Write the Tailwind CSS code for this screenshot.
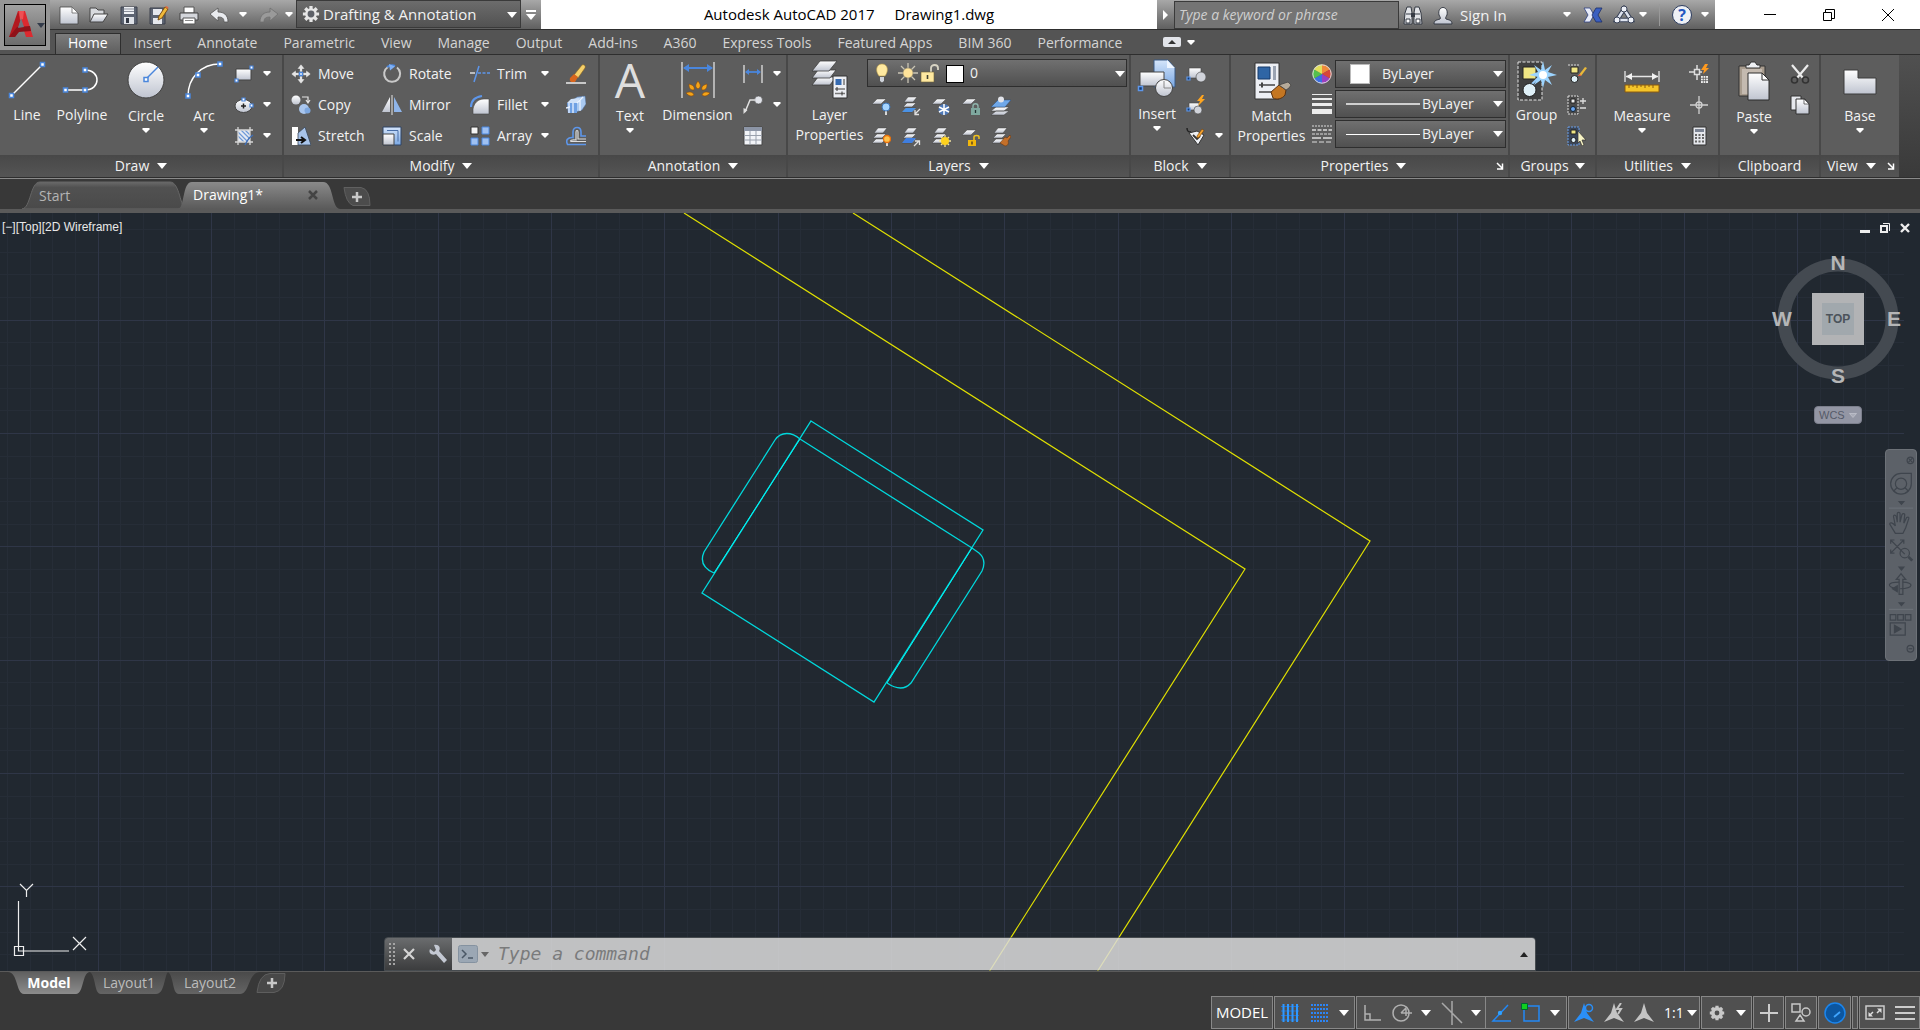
<!DOCTYPE html>
<html lang="en">
<head>
  <meta charset="UTF-8" />
  <title>Autodesk AutoCAD 2017 - Drawing1.dwg</title>
  <meta name="viewport" content="width=device-width, initial-scale=1" />
  <script src="https://cdn.jsdelivr.net/npm/@tailwindcss/browser@4"></script>
  <style>
    body { font-family: "Open Sans", "Noto Sans", sans-serif; }
  </style>
</head>
<body class="min-h-screen flex flex-col bg-[#383838] text-sm text-[#f2f2f2] overflow-hidden">

  <!-- ICON SPRITE -->
  <svg class="absolute w-0 h-0" aria-hidden="true">
    <defs>
      <linearGradient id="silver" x1="0" y1="0" x2="0" y2="1"><stop offset="0" stop-color="#fff"/><stop offset="1" stop-color="#bfc4d0"/></linearGradient>
      <linearGradient id="blue" x1="0" y1="0" x2="0" y2="1"><stop offset="0" stop-color="#d5e5fa"/><stop offset="1" stop-color="#7aa8e4"/></linearGradient>
      <linearGradient id="tabOn" x1="0" y1="0" x2="0" y2="1"><stop offset="0" stop-color="#8a8a8a"/><stop offset="1" stop-color="#5a5a5a"/></linearGradient>
      <linearGradient id="tabOff" x1="0" y1="0" x2="0" y2="1"><stop offset="0" stop-color="#6a6a6a"/><stop offset="0.2" stop-color="#515151"/><stop offset="1" stop-color="#4a4a4a"/></linearGradient>
      <linearGradient id="sheetOn" x1="0" y1="0" x2="0" y2="1"><stop offset="0" stop-color="#606060"/><stop offset="1" stop-color="#8c8c8c"/></linearGradient>
      <linearGradient id="sheetOff" x1="0" y1="0" x2="0" y2="1"><stop offset="0" stop-color="#4a4a4a"/><stop offset="1" stop-color="#646464"/></linearGradient>
    </defs>

    <symbol id="arrow" viewBox="0 0 8 5"><path d="M0.500 0h7v1.500L4 5 0.500 1.500z" fill="#fff"/></symbol>
    <symbol id="arrowBig" viewBox="0 0 10 6"><path d="M0 0h10L5 6z" fill="#fff"/></symbol>
    <symbol id="launcher" viewBox="0 0 8 8"><path d="M1 1l5 5M6.500 1.500v5.500H1" fill="none" stroke="#fff" stroke-width="1.500"/></symbol>

    <!-- quick access -->
    <symbol id="new" viewBox="0 0 20 20"><path d="M1 2h12l6 6v11H1z" fill="url(#silver)" stroke="#444" stroke-width="0.800"/><path d="M13 2v6h6z" fill="#fff" stroke="#666" stroke-width="0.800"/></symbol>
    <symbol id="open" viewBox="0 0 20 20"><path d="M1 17V3h6l2 2h6v4" fill="#d8dade" stroke="#444"/><path d="M1 17L5 9h14l-5 8z" fill="url(#silver)" stroke="#444"/></symbol>
    <symbol id="save" viewBox="0 0 20 20"><path d="M2 2h16v17H2z" fill="#5d6472" stroke="#3c414c"/><path d="M5 2h10v7H5z" fill="#eef0f4"/><path d="M5 4h10M5 6.500h10" stroke="#8b909c"/><path d="M5 12h10v7H5z" fill="#dfe2e8"/><path d="M7 13h3v5H7z" fill="#333945"/></symbol>
    <symbol id="saveas" viewBox="0 0 20 20"><path d="M1 3h15v16H1z" fill="#5d6472" stroke="#3c414c"/><path d="M4 4h9v6H4zM4 13h9v6H4z" fill="#e6e8ed"/><path d="M9 15l1-4 6-9 3 2-6 9z" fill="#f0b93a" stroke="#7a4e16"/><path d="M16 2l3 2 0.500-1.500-2-1.500z" fill="#e26a3f"/></symbol>
    <symbol id="print" viewBox="0 0 20 20"><path d="M5 2h10v6H5z" fill="#fff" stroke="#555"/><path d="M1 8h18v7H1z" fill="#d4d6db" stroke="#444"/><path d="M4 13h12v6H4z" fill="#fff" stroke="#555"/><path d="M6 15.500h8" stroke="#888"/></symbol>
    <symbol id="undo" viewBox="0 0 20 20"><path d="M1 9l8-6v4c6 0 10 3 10 10h-4c0-4-2-5-6-5v4z" fill="#e9ebef" stroke="#555" stroke-width="0.800"/></symbol>
    <symbol id="redo" viewBox="0 0 20 20"><path d="M19 9l-8-6v4C5 7 1 10 1 17h4c0-4 2-5 6-5v4z" fill="#9a9a9a" stroke="#707070" stroke-width="0.800"/></symbol>
    <symbol id="gear" viewBox="0 0 20 20"><g stroke="#e6e6e6" stroke-width="3.600"><path d="M10 1v18M1 10h18M3.600 3.600l12.800 12.800M16.400 3.600L3.600 16.400"/></g><circle cx="10" cy="10" r="6.500" fill="#e6e6e6"/><circle cx="10" cy="10" r="3.800" fill="#5e6168"/></symbol>
    <symbol id="binoculars" viewBox="0 0 20 20"><path d="M1 19l1-11 2-6h4l1 6v11zM11 19V8l1-6h4l2 6 1 11z" fill="#e2e4e8" stroke="#353a44"/><path d="M8 8h4v4H8z" fill="#353a44"/><path d="M3 14h4v4H3zM13 14h4v4h-4zM3 9h5M12 9h5" stroke="#353a44" fill="#fff"/></symbol>
    <symbol id="person" viewBox="0 0 20 20"><path d="M1 19c0-4 3-4 6-5 1-1 0-2-1-4-2-10 10-10 8 0-1 2-2 3-1 4 3 1 6 1 6 5z" fill="url(#silver)" stroke="#353a44"/></symbol>
    <symbol id="exchange" viewBox="0 0 20 18"><path d="M1 2h6l4 7-4 7H1l4-7z" fill="#e8ecf8" stroke="#2d4080" stroke-width="0.800"/><path d="M19 2h-6L9 9l4 7h6l-4-7z" fill="#3a5fc0" stroke="#1d2e68" stroke-width="0.800"/></symbol>
    <symbol id="a360" viewBox="0 0 22 20"><path d="M11 4L4 15h14z" fill="none" stroke="#3a4358" stroke-width="4.500"/><path d="M11 4L4 15h14z" fill="none" stroke="#dfe4f0" stroke-width="2.500"/><g fill="#eef1f8" stroke="#3a4358"><circle cx="11" cy="4" r="3"/><circle cx="4" cy="15" r="3"/><circle cx="18" cy="15" r="3"/></g></symbol>

    <!-- draw -->
    <symbol id="line" viewBox="0 0 40 40"><path d="M5 35L35 5" stroke="#fff" stroke-width="1.500"/><g fill="#fff" stroke="#4a86dc" stroke-width="1.500"><path d="M2.500 33.500h4v4h-4zM33.500 2.500h4v4h-4z"/></g></symbol>
    <symbol id="polyline" viewBox="0 0 40 40"><path d="M3 30h20c16 0 16-20 0-20" fill="none" stroke="#fff" stroke-width="1.500"/><g fill="#fff" stroke="#4a86dc" stroke-width="1.500"><path d="M1.500 28h4v4h-4zM21 28h4v4h-4zM21 8h4v4h-4z"/></g></symbol>
    <symbol id="circle" viewBox="0 0 40 40"><circle cx="20" cy="20" r="18" fill="url(#silver)" stroke="#3f3f3f"/><path d="M20 19L32 7" stroke="#4a86dc" stroke-width="1.500"/><path d="M18 17.500h4v4h-4z" fill="#fff" stroke="#4a86dc" stroke-width="1.500"/></symbol>
    <symbol id="arc" viewBox="0 0 40 40"><path d="M4 36C4 18 17 4 36 4" fill="none" stroke="#fff" stroke-width="1.500"/><g fill="#fff" stroke="#4a86dc" stroke-width="1.500"><path d="M2 34h4v4H2zM12 13h4v4h-4zM34 2h4v4h-4z"/></g></symbol>
    <symbol id="rect" viewBox="0 0 20 20"><path d="M2 5h15v11H2z" fill="url(#silver)" stroke="#444"/><path d="M16 2h3v3h-3zM1 15h3v3H1z" fill="#fff" stroke="#4a86dc" stroke-width="1.200"/></symbol>
    <symbol id="ellipse" viewBox="0 0 20 20"><ellipse cx="9.500" cy="11" rx="8.500" ry="6.500" fill="url(#silver)" stroke="#444"/><path d="M8 3h3v3H8zM16 9h3v3h-3z" fill="#fff" stroke="#4a86dc" stroke-width="1.200"/><path d="M7 11h5M9.500 8.500v5" stroke="#222" stroke-width="1.500"/></symbol>
    <symbol id="hatch" viewBox="0 0 20 20"><path d="M4 4h12v12H4z" fill="#e6eaf2"/><path d="M4 6l10 10M7 4l9 9M4 10l6 6M11 4l5 5" stroke="#6f9ad8" stroke-width="1.200"/><path d="M1 4h18M1 16h18M4 1v18M16 1v18" stroke="#d5d5d5" stroke-width="1.300"/><path d="M11 19c3-6 4-7 8-10" stroke="#3f6fb8" stroke-width="1.500" fill="none"/></symbol>

    <!-- modify -->
    <symbol id="move" viewBox="0 0 20 20"><path d="M10 0l4 5h-2.500v3h-3V5H6zM10 20l4-5h-2.500v-3h-3v3H6zM0 10l5-4v2.500h3v3H5V14zM20 10l-5-4v2.500h-3v3h3V14z" fill="#e4e4e4" stroke="#444" stroke-width="0.500"/><path d="M8.500 8.500h3v3h-3z" fill="#fff" stroke="#4a86dc" stroke-width="1.300"/></symbol>
    <symbol id="copy" viewBox="0 0 20 20"><circle cx="5" cy="5" r="4.500" fill="url(#silver)"/><circle cx="13" cy="14" r="5" fill="#a9c6ee"/><circle cx="16.500" cy="15.500" r="3" fill="#7ea8e0"/><path d="M11 2h6v5m-2-2l2 3 2-3" fill="none" stroke="#e4e4e4" stroke-width="1.200"/></symbol>
    <symbol id="stretch" viewBox="0 0 20 20"><path d="M1 1h6v18H1z" fill="#fff"/><path d="M7 19V7l7-6 6 18z" fill="#a8c4ea" stroke="#39475c" stroke-width="0.800"/><path d="M5 14h8m-3-3l4 3-4 3" fill="none" stroke="#111" stroke-width="2"/></symbol>
    <symbol id="rotate" viewBox="0 0 20 20"><path d="M6 3a8 8 0 1 0 9 0.500" fill="none" stroke="#c9c9c9" stroke-width="2"/><path d="M5 3c3-2 6-2 8-1" stroke="#4a86dc" stroke-width="2" fill="none"/><path d="M7 0l6 2.500-5 4z" fill="#7fb0f5"/></symbol>
    <symbol id="mirror" viewBox="0 0 20 20"><path d="M8 2v15H0z" fill="url(#silver)"/><path d="M12 2v15h8z" fill="#8fb5ea"/><path d="M10 0v20" stroke="#e8e8e8"/></symbol>
    <symbol id="scale" viewBox="0 0 20 20"><path d="M1 1h18v18H1z" fill="url(#blue)" stroke="#2e4466"/><path d="M1 8h11v11H1z" fill="url(#silver)" stroke="#444"/><path d="M5 4.500h11v11" fill="none" stroke="#486ea8"/></symbol>
    <symbol id="trim" viewBox="0 0 20 20"><path d="M0 9h5" stroke="#ddd" stroke-width="1.500"/><path d="M4 18L9 2" stroke="#5d96ea" stroke-width="1.500"/><path d="M8 9h12" stroke="#5d96ea" stroke-width="1.500" stroke-dasharray="3 1.500"/></symbol>
    <symbol id="fillet" viewBox="0 0 20 20"><path d="M3 19v-5C4 8 8 4 14 4h5v15z" fill="url(#silver)" stroke="#444" stroke-width="0.600"/><path d="M1 12C1 6 5 2 12 1" fill="none" stroke="#5d96ea" stroke-width="2"/></symbol>
    <symbol id="array" viewBox="0 0 20 20"><path d="M1 1h7v7H1z" fill="#f4f4f4" stroke="#333"/><g fill="#9ec0f2" stroke="#4a86dc"><path d="M12 1h7v7h-7zM1 12h7v7H1zM12 12h7v7h-7z"/></g></symbol>
    <symbol id="erase" viewBox="0 0 20 20"><path d="M8 11l8-10c2-1 4 1 3 3l-7 10z" fill="#f5d06a" stroke="#8a6420" stroke-width="0.600"/><path d="M4 14l4-4 4 3-3 5c-3 1-6 0-5-4z" fill="#d9661c"/><path d="M0 19h20" stroke="#ececec" stroke-width="1.500"/></symbol>
    <symbol id="explode" viewBox="0 0 20 20"><path d="M7 5l4-3 8-1 1 8-4 6-6 2z" fill="#a9c9f0" stroke="#4d6f9e" stroke-width="0.500"/><path d="M1 8h10v10H2z" fill="#6fa1e4"/><path d="M1 8l4-4 9-1-3 5z" fill="#cfe1f8"/><path d="M11 8l6-6M3 8v10M7 8v10M14 5v11M0 13l4-1" stroke="#e9f2ff" stroke-width="1.300"/></symbol>
    <symbol id="offset" viewBox="0 0 20 20"><path d="M20 18.500H1.500c-2-4 0-7.500 5.500-7V6c0-6 8-6 8 0v4h5" fill="none" stroke="#5d96ea" stroke-width="1.600"/><path d="M20 15.500H5c-1-1 0-2 5-1.500V6c0-2 2-2 2 0v7h8" fill="none" stroke="#ddd" stroke-width="1.200"/></symbol>

    <!-- annotation -->
    <symbol id="dimension" viewBox="0 0 40 40"><path d="M4 2v36M36 2v36" stroke="#e0e0e0" stroke-width="1.300"/><path d="M6 8h28" stroke="#4a86dc" stroke-width="2"/><path d="M5 8l6-4v8zM35 8l-6-4v8z" fill="#4a86dc"/><g fill="#f5a418" stroke="#8c4a08" stroke-width="0.600"><path d="M20 21c3 4 3 6 0 8-3-2-3-4 0-8zM11 24c4 1 6 3 5 6-4 0-5-2-5-6zM29 24c-4 1-6 3-5 6 4 0 5-2 5-6zM8 33c4-2 7-1 8 2-3 2-5 1-8-2zM32 33c-4-2-7-1-8 2 3 2 5 1 8-2z"/></g></symbol>
    <symbol id="linear" viewBox="0 0 20 20"><path d="M1 1v18M19 1v18" stroke="#e0e0e0" stroke-width="1.300"/><path d="M3 8h14" stroke="#4a86dc" stroke-width="1.800"/><path d="M2 8l4-3v6zM18 8l-4-3v6z" fill="#4a86dc"/></symbol>
    <symbol id="leader" viewBox="0 0 20 20"><circle cx="15.500" cy="5" r="4" fill="#e2e4ea" stroke="#444" stroke-width="0.600"/><path d="M12 5H7L2 17" fill="none" stroke="#e0e0e0" stroke-width="1.500"/><path d="M0.500 19l0-6 4 2z" fill="#e0e0e0"/></symbol>
    <symbol id="table" viewBox="0 0 20 20"><path d="M1 1h18v18H1z" fill="#f2f4f8" stroke="#444"/><path d="M1 1h18v4H1z" fill="#8c95a6"/><path d="M1 9.500h18M1 14h18M7 5v14M13 5v14" stroke="#99a0ac"/></symbol>

    <!-- layers -->
    <symbol id="layerProps" viewBox="0 0 40 40"><g fill="url(#silver)" stroke="#3c3c3c" stroke-width="0.800"><path d="M2 25l6-8h18l-6 8z"/><path d="M2 18l6-8h18l-6 8z"/><path d="M2 11l8-10h17l-8 10z"/></g><path d="M23 16h14v22H23z" fill="#eceef3" stroke="#333"/><path d="M25.500 19h6v6h-6z" fill="#356ab0"/><path d="M34 19v6M25 29h10M25 33.500h10" stroke="#777" stroke-width="1.500"/><path d="M27 31v-4M32 35.500v-4" stroke="#333"/></symbol>
    <symbol id="bulb" viewBox="0 0 20 20"><path d="M7 13C3 8 4 1 10 1s7 7 3 12z" fill="#ffe9a0" stroke="#b89c4c" stroke-width="0.600"/><path d="M8 14h4v4l-2 1.500L8 18z" fill="#cfd3da"/></symbol>
    <symbol id="sun" viewBox="0 0 20 20"><path d="M10 0v20M0 10h20M3 3l14 14M17 3L3 17" stroke="#c9c4b4" stroke-width="1.300"/><circle cx="10" cy="10" r="5" fill="#ffe39a" stroke="#8d8468" stroke-width="0.600"/></symbol>
    <symbol id="unlock" viewBox="0 0 20 20"><path d="M11 9V5c0-4 7-4 7 0v2" fill="none" stroke="#d8d4c4" stroke-width="1.800"/><path d="M1 9h13v10H1z" fill="#ffe9a0" stroke="#6f6238" stroke-width="0.600"/><path d="M7.500 12v4" stroke="#443" stroke-width="1.600"/></symbol>
    <symbol id="sheet" viewBox="0 0 20 20"><path d="M1 8l5-5h9l-5 5z" fill="url(#silver)" stroke="#444" stroke-width="0.500"/></symbol>
    <symbol id="stack" viewBox="0 0 20 20"><g fill="url(#silver)" stroke="#3c3c3c" stroke-width="0.500"><path d="M1 16l4-4h10l-4 4z"/><path d="M2 11l4-4h9l-4 4z"/><path d="M3 6l4-5h9l-4 5z"/></g></symbol>
    <symbol id="layOff" viewBox="0 0 20 20"><use href="#sheet"/><path d="M15 14v5" stroke="#d8d8d8" stroke-width="2"/><circle cx="15" cy="11" r="4" fill="#a5d4ff" stroke="#3d74b4"/></symbol>
    <symbol id="layIso" viewBox="0 0 20 20"><use href="#stack"/><path d="M1 16l4-4h10l-4 4z" fill="#4a92e6"/><path d="M19 13l-5 5m0-4v4.500h4" fill="none" stroke="#e0e0e0" stroke-width="1.300"/></symbol>
    <symbol id="layFreeze" viewBox="0 0 20 20"><use href="#sheet"/><circle cx="13" cy="13.500" r="5.500" fill="#4d78b8"/><path d="M13 8v11M8 11l10 5M18 11L8 16" stroke="#fff" stroke-width="1.500"/></symbol>
    <symbol id="layLock" viewBox="0 0 20 20"><use href="#sheet"/><path d="M12 13v-3c0-3 5-3 5 0v3" fill="none" stroke="#8fb5ad" stroke-width="1.400"/><path d="M10 12h9v7h-9z" fill="#7fa89f"/><path d="M14.500 14v3" stroke="#233" stroke-width="1.300"/></symbol>
    <symbol id="layCur" viewBox="0 0 20 20"><g fill="url(#silver)" stroke="#3c3c3c" stroke-width="0.500"><path d="M0 19l5-4h13l-5 4zM0 15l5-4h13l-5 4z"/></g><path d="M0 11l7-7h13l-6 7z" fill="#6fa8ea" stroke="#2c4c78" stroke-width="0.500"/><circle cx="10" cy="3.500" r="3" fill="#e2e4ea"/></symbol>
    <symbol id="layOn" viewBox="0 0 20 20"><use href="#stack"/><path d="M16 15v4" stroke="#d8d8d8" stroke-width="2"/><circle cx="16" cy="12" r="3.500" fill="#ffc24a" stroke="#e8700c" stroke-width="1.300"/></symbol>
    <symbol id="layUniso" viewBox="0 0 20 20"><use href="#stack"/><path d="M1 16l4-5h10l-4 5z" fill="#3f7ee0"/><path d="M13 19l5-5m-4 0h4.500v4" fill="none" stroke="#e0e0e0" stroke-width="1.300"/></symbol>
    <symbol id="layThaw" viewBox="0 0 20 20"><use href="#stack"/><path d="M14 8v12M8 14h12M10 10l8 8M18 10l-8 8" stroke="#f2e2a0" stroke-width="1.300"/><circle cx="14" cy="14" r="4" fill="#ffd21e"/></symbol>
    <symbol id="layUnlock" viewBox="0 0 20 20"><use href="#sheet"/><path d="M13 13v-3c0-2 5-2 5 0v2" fill="none" stroke="#f2c21c" stroke-width="1.500"/><path d="M7 13h8v6H7z" fill="#f2b70c"/><path d="M11 14.500v3" stroke="#432" stroke-width="1.300"/></symbol>
    <symbol id="layMatch" viewBox="0 0 20 20"><use href="#stack"/><path d="M19 8l-3 3-2-1-5 6 5 3c3 0 4-3 3-5l3-4z" fill="#c4702a" stroke="#5c3210" stroke-width="0.500"/></symbol>

    <!-- block -->
    <symbol id="insert" viewBox="0 0 40 40"><path d="M17 1h14l7 8v19H17z" fill="url(#blue)" stroke="#3b5a85"/><path d="M30 1v8h8z" fill="#eef5ff"/><path d="M3 13h24v14H3z" fill="url(#silver)" stroke="#444"/><circle cx="27" cy="29" r="8.500" fill="url(#silver)" stroke="#444"/><path d="M27 22v7h7" stroke="#888" fill="none"/><path d="M1.500 27.500h4v4h-4z" fill="#123a70" stroke="#5d96ea" stroke-width="1.500"/></symbol>
    <symbol id="block" viewBox="0 0 20 20"><path d="M3 4h12v10H3z" fill="url(#silver)" stroke="#444" stroke-width="0.600"/><circle cx="15" cy="13" r="5" fill="#d0d3da" stroke="#444" stroke-width="0.600"/><path d="M1 13h3v3H1z" fill="#123a70" stroke="#5d96ea" stroke-width="1.200"/></symbol>
    <symbol id="blockEdit" viewBox="0 0 20 20"><path d="M3 8h10v7H3z" fill="url(#silver)" stroke="#444" stroke-width="0.600"/><circle cx="12" cy="15" r="4" fill="#d0d3da" stroke="#444" stroke-width="0.600"/><path d="M1 13h3v3H1z" fill="#123a70" stroke="#5d96ea" stroke-width="1.200"/><path d="M16 0l-5 6h3l-2 5 7-7h-3l2-4z" fill="#ffa51f"/></symbol>
    <symbol id="attr" viewBox="0 0 20 20"><path d="M1 2c0 4 2 4 4 4" fill="none" stroke="#222" stroke-width="1.500"/><path d="M3 7l8-2 7 4-6 10z" fill="#eef0f4" stroke="#333"/><path d="M7 9l4 4 3-3" stroke="#333" stroke-width="1.800" fill="none"/><path d="M11 10l5-7 2 1.500-5 7-2 0.500z" fill="#f0a030" stroke="#6b3c0a" stroke-width="0.600"/></symbol>

    <!-- properties -->
    <symbol id="matchProps" viewBox="0 0 40 40"><path d="M3 2h24v36H3z" fill="#edeff4" stroke="#333"/><path d="M6 6h12v12H6z" fill="#2f65a5" stroke="#173b6a"/><path d="M21 5h3v14h-3z" fill="#9aa3b2"/><path d="M7 24h16M7 31h12" stroke="#444" stroke-width="1.500"/><path d="M10 21.500v5" stroke="#444" stroke-width="2"/><path d="M19 31l8-7 7 5-1 5c-3 4-8 5-12 3z" fill="#c47622" stroke="#5c3210"/><path d="M27 24l3-1 6-2 3 3-2 3-3 2z" fill="#b5aa9a" stroke="#444" stroke-width="0.800"/></symbol>
    <symbol id="wheel" viewBox="0 0 20 20"><path d="M10 10V0.500A9.500 9.500 0 0 1 18.200 5.200z" fill="#f08a3a"/><path d="M10 10l8.200-4.800A9.500 9.500 0 0 1 18.200 14.800z" fill="#d8453a"/><path d="M10 10l8.200 4.800A9.500 9.500 0 0 1 10 19.500z" fill="#9a3fc0"/><path d="M10 10v9.500A9.500 9.500 0 0 1 1.800 14.800z" fill="#3d6fe0"/><path d="M10 10l-8.200 4.800A9.500 9.500 0 0 1 1.800 5.200z" fill="#55bf4c"/><path d="M10 10L1.800 5.200A9.500 9.500 0 0 1 10 0.500z" fill="#e3e05a"/><circle cx="10" cy="10" r="9.200" fill="none" stroke="#dedede"/></symbol>
    <symbol id="weights" viewBox="0 0 20 20"><path d="M0 0h20v1H0zM0 4h20v2H0zM0 9h20v3H0zM0 15h20v5H0z" fill="#ececec"/></symbol>
    <symbol id="ltypes" viewBox="0 0 20 20"><path d="M0 2h20" stroke="#ddd" stroke-dasharray="2 1"/><path d="M0 6h20" stroke="#ddd" stroke-width="1.300" stroke-dasharray="4 1.500"/><path d="M0 10h20" stroke="#ddd" stroke-dasharray="3 1"/><path d="M0 14h20" stroke="#ddd" stroke-width="1.300" stroke-dasharray="9 2"/><path d="M0 18h20" stroke="#ddd" stroke-dasharray="5 2"/></symbol>

    <!-- groups -->
    <symbol id="group" viewBox="0 0 40 40"><path d="M1 1h24v38H1z" fill="#404040" stroke="#e4e4e4" stroke-dasharray="3 1.500"/><path d="M6 6h13v12H6z" fill="#f0e684" stroke="#222"/><path d="M14 24l10-10" stroke="#9cd0ff" stroke-width="2"/><circle cx="12.500" cy="29" r="6.500" fill="#dff0f7" stroke="#222"/><path d="M26 0l2 9 7-5-4 7 9 3-9 2 4 8-7-5-2 8-2-8-7 5 4-8-9-2 9-3-4-7 7 5z" fill="#9cd4ff"/><circle cx="26" cy="14" r="4" fill="#fff"/></symbol>
    <symbol id="groupEdit" viewBox="0 0 20 20"><path d="M1 1h12" stroke="#ddd" stroke-dasharray="2 1"/><path d="M4 3h7v6H4z" fill="#f0e684" stroke="#222"/><circle cx="7.500" cy="15" r="3.500" fill="#dff0f7" stroke="#222"/><path d="M11 12l7-9 2 1-6 8z" fill="#e9b93a"/><path d="M11 12l2-2 1 2z" fill="#e44"/></symbol>
    <symbol id="ungroup" viewBox="0 0 20 20"><path d="M1 1h10v18H1z" fill="#4a4a4a" stroke="#ddd" stroke-dasharray="2 1"/><path d="M4 4h4v4H4z" fill="#eee" stroke="#222"/><circle cx="6" cy="14" r="2.500" fill="#6aa5f0" stroke="#123"/><path d="M13 6h6M16 3v6M13 13h6" stroke="#ddd" stroke-width="1.300"/></symbol>
    <symbol id="groupSel" viewBox="0 0 20 20"><path d="M1 1h11v18H1z" fill="#3b4658" stroke="#6a9ee8" stroke-dasharray="2 1"/><path d="M4 4h5v4H4z" fill="#f0e684" stroke="#222"/><circle cx="6.500" cy="14" r="2.500" fill="#dff0f7" stroke="#222"/><path d="M11 5l8 9h-4l2 5-2 1-2-5-2 2z" fill="#f7f3c4" stroke="#333" stroke-width="0.700"/></symbol>

    <!-- utilities -->
    <symbol id="measure" viewBox="0 0 40 40"><path d="M3 10v11M37 10v11M4 15.500h32" stroke="#e6e6e6" stroke-width="1.300"/><path d="M4 15.500l6-3.500v7zM36 15.500l-6-3.500v7z" fill="#f2f2f2"/><path d="M3 24h34v7H3z" fill="#f5c52a" stroke="#8a5a10"/><path d="M7 24v3M11 24v2M15 24v3M19 24v2M23 24v3M27 24v2M31 24v3" stroke="#8a5a10"/></symbol>
    <symbol id="quickSel" viewBox="0 0 20 20"><path d="M0 8h5M8 1v5M8 11v5M11 8h2" stroke="#ddd" stroke-width="1.500"/><path d="M5.500 5.500h5v5h-5z" fill="none" stroke="#ddd" stroke-width="1.500"/><path d="M16 0l-4 6h3l-1 4 6-6h-3l2-4z" fill="#ff9a1f"/><path d="M12 12h7v7h-7z" fill="#eee"/><path d="M12 14.300h7M12 16.600h7M14.300 12v7M16.600 12v7" stroke="#555" stroke-width="0.700"/></symbol>
    <symbol id="point" viewBox="0 0 20 20"><path d="M10 1v18M1 10h18" stroke="#d0d0d0" stroke-width="1.300"/><circle cx="10" cy="10" r="3" fill="none" stroke="#d0d0d0" stroke-width="1.300"/></symbol>
    <symbol id="calc" viewBox="0 0 20 20"><path d="M4 1h13v18H4z" fill="#e6e8ed" stroke="#333"/><path d="M6 3h9v3H6z" fill="#7c8494"/><path d="M6 9h9M6 12h9M6 15.500h9" stroke="#666" stroke-width="1.800" stroke-dasharray="2 1.500"/></symbol>

    <!-- clipboard + view -->
    <symbol id="paste" viewBox="0 0 40 40"><path d="M5 5h26v30H5z" fill="#a89c8e" stroke="#333"/><path d="M8 8h20v25H8z" fill="#c4bab0"/><path d="M12 7V4h3l2-3h4l2 3h3v3z" fill="#eef0f4" stroke="#333"/><path d="M14 12h14l7 7v20H14z" fill="url(#silver)" stroke="#2c2c2c"/><path d="M28 12v7h7z" fill="#fff" stroke="#2c2c2c"/></symbol>
    <symbol id="cut" viewBox="0 0 20 20"><path d="M2 1l11 13M18 1L7 14" stroke="#ececec" stroke-width="2.200"/><circle cx="4.500" cy="16" r="3" fill="none" stroke="#333" stroke-width="1.600"/><circle cx="15.500" cy="16" r="3" fill="none" stroke="#333" stroke-width="1.600"/></symbol>
    <symbol id="copyclip" viewBox="0 0 20 20"><path d="M1 1h10v14H1z" fill="#e6e8ed" stroke="#333"/><path d="M6 4h9l4 5v10H6z" fill="url(#silver)" stroke="#333"/><path d="M14 4v5h5z" fill="#fff" stroke="#333" stroke-width="0.700"/></symbol>
    <symbol id="base" viewBox="0 0 40 40"><path d="M4 9h14v8h18v16H4z" fill="url(#silver)" stroke="#3c3c3c"/></symbol>
  </svg>

  <!-- HEADER -->
  <header class="flex bg-[#545454]">
    <div class="w-[50px] h-[50px] shrink-0 bg-[#969696] p-1">
      <button aria-label="Application menu" class="flex items-center w-[42px] h-[42px] border border-black bg-gradient-to-b from-[#a2a2a2] to-[#6c6c6c]">
        <svg class="w-8 h-9 shrink-0" viewBox="0 0 32 36"><path d="M4 30L13 4h6L10 30z" fill="#b3191f"/><path d="M13 4h7l8 26h-7z" fill="#dd2a30"/><path d="M14 4h5l-1 8-3 1z" fill="#ef5054"/><path d="M4 30l8-10 13-1 1 5-12 1-4 5z" fill="#8e1219"/><path d="M16 11l-3 10 6-1z" fill="#70757e"/></svg>
        <svg class="w-2 h-[5px]" viewBox="0 0 8 5"><path d="M0 0h8L4 5z" fill="#333b4a"/></svg>
      </button>
    </div>
    <div class="flex-1 min-w-0">
      <!-- title bar -->
      <div class="flex h-[29px] bg-white text-[15px] leading-7">
        <div class="flex items-center w-[246px] shrink-0 bg-gradient-to-b from-[#a8a8a8] to-[#606060] pl-[9px]">
          <button aria-label="New" class="w-[30px]"><svg class="w-5 h-5"><use href="#new"/></svg></button>
          <button aria-label="Open" class="w-[30px]"><svg class="w-5 h-5"><use href="#open"/></svg></button>
          <button aria-label="Save" class="w-[30px]"><svg class="w-5 h-5"><use href="#save"/></svg></button>
          <button aria-label="Save As" class="w-[30px]"><svg class="w-5 h-5"><use href="#saveas"/></svg></button>
          <button aria-label="Plot" class="w-[30px]"><svg class="w-5 h-5"><use href="#print"/></svg></button>
          <button aria-label="Undo" class="w-[30px]"><svg class="w-5 h-5"><use href="#undo"/></svg></button>
          <svg class="w-2 h-[5px] mr-3"><use href="#arrow"/></svg>
          <button aria-label="Redo" class="w-[26px]"><svg class="w-5 h-5"><use href="#redo"/></svg></button>
          <svg class="w-2 h-[5px]"><use href="#arrow"/></svg>
        </div>
        <div class="relative w-[225px] shrink-0 bg-[#606060]">
          <select aria-label="Workspace" class="appearance-none block w-full h-7 pl-[26px] border border-[#3a3a3a] bg-gradient-to-b from-[#6c6c6c] to-[#525252] text-[15px] leading-6 text-[#f2f2f2]"><option>Drafting &amp; Annotation</option></select>
          <svg class="absolute left-[6px] top-[5px] w-[18px] h-[18px]"><use href="#gear"/></svg>
          <svg class="absolute right-1 top-3 w-[10px] h-[6px]"><use href="#arrowBig"/></svg>
        </div>
        <button aria-label="Customize" class="flex flex-col items-center justify-center gap-[2px] w-5 shrink-0 bg-gradient-to-b from-[#a8a8a8] to-[#606060]">
          <span class="w-[10px] h-[2px] bg-white"></span><svg class="w-[10px] h-[6px]"><use href="#arrowBig"/></svg>
        </button>
        <div class="flex-1 flex justify-center gap-5 text-black">
          <span>Autodesk AutoCAD 2017</span><span>Drawing1.dwg</span>
        </div>
        <div class="flex items-center w-[558px] shrink-0 bg-gradient-to-b from-[#a8a8a8] to-[#606060]">
          <svg class="w-[5px] h-[10px] mx-[6px]" viewBox="0 0 5 10"><path d="M0 0l5 5-5 5z" fill="#fff"/></svg>
          <input type="text" aria-label="Search" placeholder="Type a keyword or phrase" class="w-[225px] h-7 px-1 border border-[#3a3a3a] bg-[#747474] text-sm italic placeholder:text-[#cfcfcf]" />
          <button aria-label="Find" class="ml-1"><svg class="w-5 h-5"><use href="#binoculars"/></svg></button>
          <button class="flex items-center gap-[7px] ml-[10px]"><svg class="w-5 h-5"><use href="#person"/></svg>Sign In</button>
          <svg class="w-2 h-[5px] ml-auto"><use href="#arrow"/></svg>
          <button aria-label="Exchange" class="ml-3"><svg class="w-5 h-[18px]"><use href="#exchange"/></svg></button>
          <button aria-label="A360" class="ml-[10px]"><svg class="w-[22px] h-5"><use href="#a360"/></svg></button>
          <svg class="w-2 h-[5px] ml-1"><use href="#arrow"/></svg>
          <span class="w-px h-[22px] bg-[#999] ml-3 mr-3"></span>
          <button aria-label="Help" class="w-5 h-5 rounded-full bg-[#eef0f5] border border-[#2c3c60] text-[#2456c0] text-base font-bold leading-4">?</button>
          <svg class="w-2 h-[5px] ml-[9px] mr-[6px]"><use href="#arrow"/></svg>
        </div>
        <div class="flex items-center w-[205px] shrink-0 pl-[25px]">
          <button aria-label="Minimize" class="w-[59px] flex justify-center"><span class="w-3 h-px bg-black"></span></button>
          <button aria-label="Restore" class="w-[59px] flex justify-center"><svg class="w-3 h-3" viewBox="0 0 12 12"><path d="M0.500 3.500h8v8h-8zM2.500 3V0.500h9v9H9" fill="none" stroke="#000"/></svg></button>
          <button aria-label="Close" class="w-[59px] flex justify-center"><svg class="w-3 h-3" viewBox="0 0 12 12"><path d="M0 0l12 12M12 0L0 12" stroke="#000"/></svg></button>
        </div>
      </div>
      <!-- ribbon tabs -->
      <nav class="flex items-stretch h-[25px] border-t border-[#2e2e2e] pl-[5px] text-[#d4d4d4] leading-[25px]">
        <a href="#" class="px-3 mt-[3px] leading-[18px] border border-b-0 border-[#2e2e2e] bg-gradient-to-b from-[#7c7c7c] to-[#5e5e5e] text-white">Home</a>
        <a href="#" class="px-[13px]">Insert</a>
        <a href="#" class="px-[13px]">Annotate</a>
        <a href="#" class="px-[13px]">Parametric</a>
        <a href="#" class="px-[13px]">View</a>
        <a href="#" class="px-[13px]">Manage</a>
        <a href="#" class="px-[13px]">Output</a>
        <a href="#" class="px-[13px]">Add-ins</a>
        <a href="#" class="px-[13px]">A360</a>
        <a href="#" class="px-[13px]">Express Tools</a>
        <a href="#" class="px-[13px]">Featured Apps</a>
        <a href="#" class="px-[13px]">BIM 360</a>
        <a href="#" class="px-[13px]">Performance</a>
        <button aria-label="Minimize ribbon" class="flex items-center gap-[6px] ml-7">
          <svg class="w-[18px] h-[10px]" viewBox="0 0 18 10"><rect width="18" height="10" rx="2" fill="#e2e4ea"/><path d="M5 7l4-4 4 4z" fill="#333"/></svg>
          <svg class="w-2 h-[5px]"><use href="#arrow"/></svg>
        </button>
      </nav>
    </div>
  </header>

  <!-- RIBBON -->
  <main class="flex h-[124px] shrink-0 border-t border-b border-[#2e2e2e] bg-gradient-to-b from-[#505050] to-[#3a3a3a] whitespace-nowrap">
    <!-- Draw -->
    <section class="flex flex-col w-[284px] shrink-0 border-r-2 border-[#484848] bg-[#5d5d5d]">
      <div class="flex h-[100px]">
        <button class="flex flex-col items-center w-[54px] pt-[5px] leading-5"><svg class="w-10 h-10 mb-[5px]"><use href="#line"/></svg>Line</button>
        <button class="flex flex-col items-center w-[56px] pt-[5px] leading-5"><svg class="w-10 h-10 mb-[5px]"><use href="#polyline"/></svg>Polyline</button>
        <button class="flex flex-col items-center w-[72px] pt-[5px] leading-5"><svg class="w-10 h-10 mb-[6px]"><use href="#circle"/></svg>Circle<svg class="w-2 h-[5px] mt-[2px]"><use href="#arrow"/></svg></button>
        <button class="flex flex-col items-center w-[44px] pt-[5px] leading-5"><svg class="w-10 h-10 mb-[6px]"><use href="#arc"/></svg>Arc<svg class="w-2 h-[5px] mt-[2px]"><use href="#arrow"/></svg></button>
        <div class="pt-[3px] pl-2">
          <button aria-label="Rectangle" class="flex items-center gap-[9px] h-[31px]"><svg class="w-5 h-5"><use href="#rect"/></svg><svg class="w-2 h-[5px]"><use href="#arrow"/></svg></button>
          <button aria-label="Ellipse" class="flex items-center gap-[9px] h-[31px]"><svg class="w-5 h-5"><use href="#ellipse"/></svg><svg class="w-2 h-[5px]"><use href="#arrow"/></svg></button>
          <button aria-label="Hatch" class="flex items-center gap-[9px] h-[31px]"><svg class="w-5 h-5"><use href="#hatch"/></svg><svg class="w-2 h-[5px]"><use href="#arrow"/></svg></button>
        </div>
      </div>
      <button class="flex-1 flex items-center justify-center gap-2 bg-gradient-to-b from-[#484848] to-[#555]">Draw<svg class="w-[10px] h-[6px]"><use href="#arrowBig"/></svg></button>
    </section>

    <!-- Modify -->
    <section class="flex flex-col w-[316px] shrink-0 border-r-2 border-[#484848] bg-[#5d5d5d]">
      <div class="flex h-[100px] pt-[3px] pl-[7px]">
        <div class="w-[91px]">
          <button class="flex items-center gap-[7px] h-[31px]"><svg class="w-5 h-5"><use href="#move"/></svg>Move</button>
          <button class="flex items-center gap-[7px] h-[31px]"><svg class="w-5 h-5"><use href="#copy"/></svg>Copy</button>
          <button class="flex items-center gap-[7px] h-[31px]"><svg class="w-5 h-5"><use href="#stretch"/></svg>Stretch</button>
        </div>
        <div class="w-[88px]">
          <button class="flex items-center gap-[7px] h-[31px]"><svg class="w-5 h-5"><use href="#rotate"/></svg>Rotate</button>
          <button class="flex items-center gap-[7px] h-[31px]"><svg class="w-5 h-5"><use href="#mirror"/></svg>Mirror</button>
          <button class="flex items-center gap-[7px] h-[31px]"><svg class="w-5 h-5"><use href="#scale"/></svg>Scale</button>
        </div>
        <div class="w-[96px]">
          <button class="flex items-center gap-[7px] w-[79px] h-[31px]"><svg class="w-5 h-5"><use href="#trim"/></svg>Trim<svg class="w-2 h-[5px] ml-auto"><use href="#arrow"/></svg></button>
          <button class="flex items-center gap-[7px] w-[79px] h-[31px]"><svg class="w-5 h-5"><use href="#fillet"/></svg>Fillet<svg class="w-2 h-[5px] ml-auto"><use href="#arrow"/></svg></button>
          <button class="flex items-center gap-[7px] w-[79px] h-[31px]"><svg class="w-5 h-5"><use href="#array"/></svg>Array<svg class="w-2 h-[5px] ml-auto"><use href="#arrow"/></svg></button>
        </div>
        <div>
          <button aria-label="Erase" class="flex items-center h-[31px]"><svg class="w-5 h-5"><use href="#erase"/></svg></button>
          <button aria-label="Explode" class="flex items-center h-[31px]"><svg class="w-5 h-5"><use href="#explode"/></svg></button>
          <button aria-label="Offset" class="flex items-center h-[31px]"><svg class="w-5 h-5"><use href="#offset"/></svg></button>
        </div>
      </div>
      <button class="flex-1 flex items-center justify-center gap-2 bg-gradient-to-b from-[#484848] to-[#555]">Modify<svg class="w-[10px] h-[6px]"><use href="#arrowBig"/></svg></button>
    </section>

    <!-- Annotation -->
    <section class="flex flex-col w-[188px] shrink-0 border-r-2 border-[#484848] bg-[#5d5d5d]">
      <div class="flex h-[100px]">
        <button class="flex flex-col items-center w-[60px] pt-[5px] leading-5"><span class="h-[40px] mb-[6px] text-5xl leading-[40px] text-[#dedede]">A</span>Text<svg class="w-2 h-[5px] mt-[2px]"><use href="#arrow"/></svg></button>
        <button class="flex flex-col items-center w-[75px] pt-[5px] leading-5"><svg class="w-10 h-10 mb-[5px]"><use href="#dimension"/></svg>Dimension</button>
        <div class="pt-[3px] pl-2">
          <button aria-label="Linear" class="flex items-center gap-[10px] h-[31px]"><svg class="w-5 h-5"><use href="#linear"/></svg><svg class="w-2 h-[5px]"><use href="#arrow"/></svg></button>
          <button aria-label="Leader" class="flex items-center gap-[10px] h-[31px]"><svg class="w-5 h-5"><use href="#leader"/></svg><svg class="w-2 h-[5px]"><use href="#arrow"/></svg></button>
          <button aria-label="Table" class="flex items-center h-[31px]"><svg class="w-5 h-5"><use href="#table"/></svg></button>
        </div>
      </div>
      <button class="flex-1 flex items-center justify-center gap-2 bg-gradient-to-b from-[#484848] to-[#555]">Annotation<svg class="w-[10px] h-[6px]"><use href="#arrowBig"/></svg></button>
    </section>

    <!-- Layers -->
    <section class="flex flex-col w-[343px] shrink-0 border-r-2 border-[#484848] bg-[#5d5d5d]">
      <div class="flex h-[100px]">
        <button class="flex flex-col items-center w-[79px] pt-[5px] pl-1 leading-5"><svg class="w-10 h-10 mb-[5px]"><use href="#layerProps"/></svg>Layer<br />Properties</button>
        <div class="pt-1">
          <div class="relative w-[260px] mb-[3px]">
            <select aria-label="Layer" class="appearance-none block w-full h-7 pl-[102px] border border-[#2e2e2e] bg-gradient-to-b from-[#707070] to-[#505050] text-sm text-[#f2f2f2]"><option>0</option></select>
            <svg class="absolute left-[5px] top-1 w-5 h-5"><use href="#bulb"/></svg>
            <svg class="absolute left-[31px] top-1 w-5 h-5"><use href="#sun"/></svg>
            <svg class="absolute left-[53px] top-1 w-5 h-5"><use href="#unlock"/></svg>
            <span class="absolute left-[79px] top-[6px] w-[18px] h-[18px] bg-white border border-black"></span>
            <svg class="absolute right-[2px] top-3 w-[10px] h-[6px]"><use href="#arrowBig"/></svg>
          </div>
          <div class="flex items-center gap-[10px] h-[31px] pl-1">
            <button aria-label="Off"><svg class="block w-5 h-5"><use href="#layOff"/></svg></button>
            <button aria-label="Isolate"><svg class="block w-5 h-5"><use href="#layIso"/></svg></button>
            <button aria-label="Freeze"><svg class="block w-5 h-5"><use href="#layFreeze"/></svg></button>
            <button aria-label="Lock"><svg class="block w-5 h-5"><use href="#layLock"/></svg></button>
            <button aria-label="Make Current"><svg class="block w-5 h-5"><use href="#layCur"/></svg></button>
          </div>
          <div class="flex items-center gap-[10px] h-[31px] pl-1">
            <button aria-label="Turn All On"><svg class="block w-5 h-5"><use href="#layOn"/></svg></button>
            <button aria-label="Unisolate"><svg class="block w-5 h-5"><use href="#layUniso"/></svg></button>
            <button aria-label="Thaw All"><svg class="block w-5 h-5"><use href="#layThaw"/></svg></button>
            <button aria-label="Unlock"><svg class="block w-5 h-5"><use href="#layUnlock"/></svg></button>
            <button aria-label="Match Layer"><svg class="block w-5 h-5"><use href="#layMatch"/></svg></button>
          </div>
        </div>
      </div>
      <button class="flex-1 flex items-center justify-center gap-2 bg-gradient-to-b from-[#484848] to-[#555]">Layers<svg class="w-[10px] h-[6px]"><use href="#arrowBig"/></svg></button>
    </section>

    <!-- Block -->
    <section class="flex flex-col w-[100px] shrink-0 border-r-2 border-[#484848] bg-[#5d5d5d]">
      <div class="flex h-[100px]">
        <button class="flex flex-col items-center w-[52px] pt-1 leading-5"><svg class="w-10 h-10 mb-[5px]"><use href="#insert"/></svg>Insert<svg class="w-2 h-[5px] mt-[2px]"><use href="#arrow"/></svg></button>
        <div class="pt-[3px] pl-[3px]">
          <button aria-label="Create" class="flex items-center h-[31px]"><svg class="w-5 h-5"><use href="#block"/></svg></button>
          <button aria-label="Edit block" class="flex items-center h-[31px]"><svg class="w-5 h-5"><use href="#blockEdit"/></svg></button>
          <button aria-label="Edit attributes" class="flex items-center gap-[9px] h-[31px]"><svg class="w-5 h-5"><use href="#attr"/></svg><svg class="w-2 h-[5px]"><use href="#arrow"/></svg></button>
        </div>
      </div>
      <button class="flex-1 flex items-center justify-center gap-2 bg-gradient-to-b from-[#484848] to-[#555]">Block<svg class="w-[10px] h-[6px]"><use href="#arrowBig"/></svg></button>
    </section>

    <!-- Properties -->
    <section class="flex flex-col w-[279px] shrink-0 border-r-2 border-[#484848] bg-[#5d5d5d]">
      <div class="flex h-[100px]">
        <button class="flex flex-col items-center w-[81px] pt-[6px] leading-5"><svg class="w-10 h-10 mb-[5px]"><use href="#matchProps"/></svg>Match<br />Properties</button>
        <div class="flex flex-col gap-[2px] pt-[5px]">
          <div class="relative flex items-center gap-[3px]">
            <svg class="w-5 h-5"><use href="#wheel"/></svg>
            <select aria-label="Object color" class="appearance-none w-[171px] h-7 pl-[46px] border border-[#2e2e2e] bg-gradient-to-b from-[#707070] to-[#505050] text-sm text-[#f2f2f2]"><option>ByLayer</option></select>
            <span class="absolute left-[38px] top-1 w-5 h-5 bg-white border border-[#bbb]"></span>
            <svg class="absolute right-[3px] top-[11px] w-[10px] h-[6px]"><use href="#arrowBig"/></svg>
          </div>
          <div class="relative flex items-center gap-[3px]">
            <svg class="w-5 h-5"><use href="#weights"/></svg>
            <select aria-label="Lineweight" class="appearance-none w-[171px] h-7 pl-[86px] border border-[#2e2e2e] bg-gradient-to-b from-[#707070] to-[#505050] text-sm text-[#f2f2f2]"><option>ByLayer</option></select>
            <span class="absolute left-[34px] top-[13px] w-[74px] h-[2px] bg-[#cfcfcf]"></span>
            <svg class="absolute right-[3px] top-[11px] w-[10px] h-[6px]"><use href="#arrowBig"/></svg>
          </div>
          <div class="relative flex items-center gap-[3px]">
            <svg class="w-5 h-5"><use href="#ltypes"/></svg>
            <select aria-label="Linetype" class="appearance-none w-[171px] h-7 pl-[86px] border border-[#2e2e2e] bg-gradient-to-b from-[#707070] to-[#505050] text-sm text-[#f2f2f2]"><option>ByLayer</option></select>
            <span class="absolute left-[34px] top-[14px] w-[74px] h-px bg-white"></span>
            <svg class="absolute right-[3px] top-[11px] w-[10px] h-[6px]"><use href="#arrowBig"/></svg>
          </div>
        </div>
      </div>
      <div class="flex-1 flex items-center bg-gradient-to-b from-[#484848] to-[#555] pr-1">
        <button class="flex-1 flex items-center justify-center gap-2">Properties<svg class="w-[10px] h-[6px]"><use href="#arrowBig"/></svg></button>
        <button aria-label="Properties palette"><svg class="block w-2 h-2"><use href="#launcher"/></svg></button>
      </div>
    </section>

    <!-- Groups -->
    <section class="flex flex-col w-[87px] shrink-0 border-r-2 border-[#484848] bg-[#5d5d5d]">
      <div class="flex h-[100px]">
        <button class="flex flex-col items-center w-[53px] pt-[6px] leading-5"><svg class="w-10 h-10 mb-1"><use href="#group"/></svg>Group</button>
        <div class="pt-[3px] pl-1">
          <button aria-label="Group edit" class="flex items-center h-[31px]"><svg class="w-5 h-5"><use href="#groupEdit"/></svg></button>
          <button aria-label="Ungroup" class="flex items-center h-[31px]"><svg class="w-5 h-5"><use href="#ungroup"/></svg></button>
          <button aria-label="Group selection" class="flex items-center h-[31px]"><svg class="w-5 h-5"><use href="#groupSel"/></svg></button>
        </div>
      </div>
      <button class="flex-1 flex items-center justify-center gap-[6px] bg-gradient-to-b from-[#484848] to-[#555]">Groups<svg class="w-[10px] h-[6px]"><use href="#arrowBig"/></svg></button>
    </section>

    <!-- Utilities -->
    <section class="flex flex-col w-[123px] shrink-0 border-r-2 border-[#484848] bg-[#5d5d5d]">
      <div class="flex h-[100px]">
        <button class="flex flex-col items-center w-[90px] pt-[6px] leading-5"><svg class="w-10 h-10 mb-[5px]"><use href="#measure"/></svg>Measure<svg class="w-2 h-[5px] mt-[2px]"><use href="#arrow"/></svg></button>
        <div class="pt-[3px] pl-[2px]">
          <button aria-label="Quick select" class="flex items-center h-[31px]"><svg class="w-5 h-5"><use href="#quickSel"/></svg></button>
          <button aria-label="ID point" class="flex items-center h-[31px]"><svg class="w-5 h-5"><use href="#point"/></svg></button>
          <button aria-label="Calculator" class="flex items-center h-[31px]"><svg class="w-5 h-5"><use href="#calc"/></svg></button>
        </div>
      </div>
      <button class="flex-1 flex items-center justify-center gap-2 bg-gradient-to-b from-[#484848] to-[#555]">Utilities<svg class="w-[10px] h-[6px]"><use href="#arrowBig"/></svg></button>
    </section>

    <!-- Clipboard -->
    <section class="flex flex-col w-[101px] shrink-0 border-r-2 border-[#484848] bg-[#5d5d5d]">
      <div class="flex h-[100px]">
        <button class="flex flex-col items-center w-[68px] pt-[6px] leading-5"><svg class="w-10 h-10 mb-[6px]"><use href="#paste"/></svg>Paste<svg class="w-2 h-[5px] mt-[2px]"><use href="#arrow"/></svg></button>
        <div class="pt-[3px] pl-[2px]">
          <button aria-label="Cut" class="flex items-center h-[31px]"><svg class="w-5 h-5"><use href="#cut"/></svg></button>
          <button aria-label="Copy clip" class="flex items-center h-[31px]"><svg class="w-5 h-5"><use href="#copyclip"/></svg></button>
        </div>
      </div>
      <div class="flex-1 flex items-center justify-center bg-gradient-to-b from-[#484848] to-[#555]">Clipboard</div>
    </section>

    <!-- View -->
    <section class="flex flex-col w-[78px] shrink-0 bg-[#5d5d5d]">
      <div class="flex justify-center h-[100px]">
        <button class="flex flex-col items-center pt-[6px] leading-5"><svg class="w-10 h-10 mb-[5px]"><use href="#base"/></svg>Base<svg class="w-2 h-[5px] mt-[2px]"><use href="#arrow"/></svg></button>
      </div>
      <div class="flex-1 flex items-center bg-gradient-to-b from-[#484848] to-[#555] pl-[6px] pr-1">
        <button class="flex-1 flex items-center gap-2">View<svg class="w-[10px] h-[6px]"><use href="#arrowBig"/></svg></button>
        <button aria-label="View settings"><svg class="block w-2 h-2"><use href="#launcher"/></svg></button>
      </div>
    </section>
  </main>

  <!-- FILE TABS -->
  <div class="flex items-end h-[35px] shrink-0 border-t border-[#8a8a8a] border-b-4 border-b-[#5a5a5a] bg-[#383838] pl-[22px] leading-[30px]">
    <button class="relative w-[156px] h-7 pl-[17px] text-left text-[#b4b4b4]">
      <svg class="absolute left-0 top-0 w-[164px] h-7" viewBox="0 0 164 28"><path d="M0 28C9 27 8 1 18 1H148C158 1 158 27 164 28z" fill="url(#tabOff)" stroke="#666"/></svg>
      <span class="relative">Start</span>
    </button>
    <button class="relative flex items-center justify-between w-[162px] h-7 pl-[15px] pr-[22px] text-white">
      <svg class="absolute left-0 top-0 w-[162px] h-7" viewBox="0 0 162 28"><path d="M0 28C7 27 4 1 14 1H145C156 1 153 27 162 28z" fill="url(#tabOn)"/></svg>
      <span class="relative">Drawing1*</span>
      <svg class="relative w-[10px] h-[10px]" viewBox="0 0 10 10"><path d="M1 1l8 8M9 1L1 9" stroke="#444" stroke-width="2.500"/></svg>
    </button>
    <button aria-label="New tab" class="ml-[3px] mb-[3px]">
      <svg class="block w-7 h-[19px]" viewBox="0 0 28 19"><path d="M1 0.500H18Q27 2 27 18.500H10Q3 16 1 0.500z" fill="#4c4c4c" stroke="#606060"/><path d="M14 5v10M9 10h10" stroke="#c8c8c8" stroke-width="2.500"/></svg>
    </button>
  </div>

  <!-- DRAWING AREA -->
  <div id="viewport" class="relative flex-1 bg-[#212830] overflow-hidden">
    <svg class="absolute inset-0 w-full h-full">
      <g id="minorGrid" stroke="#262d37"></g>
      <g id="majorGrid" stroke="#2f3647"></g>
      <g fill="none" stroke="#e0e000" stroke-width="1.200">
        <path d="M684 0L1245 356L989 759"/>
        <path d="M853 0L1370 328L1097 759"/>
      </g>
      <g fill="none" stroke="#00d8dc" stroke-width="1.300">
        <path d="M811 208L983 317L874 489L702 380z"/>
        <path d="M800 226L972 335L979 340Q987 347 982 358L911 470Q902 480 887 470"/>
        <path d="M800 226C792 219 781 218 775 227L704 339Q698 353 714 360"/>
      </g>
      <path d="M800 226L714 360M972 335L887 470" stroke="#00f4f4"/>
    </svg>

    <div class="absolute left-[2px] top-1 text-xs leading-5 text-[#e8e8e8] font-['Liberation_Sans']">[−][Top][2D Wireframe]</div>

    <div class="absolute right-[10px] top-[9px] flex items-center gap-[10px]">
      <button aria-label="Minimize drawing"><svg class="block w-[10px] h-3" viewBox="0 0 10 12"><path d="M0 8h10v3H0z" fill="#eee"/></svg></button>
      <button aria-label="Restore drawing"><svg class="block w-[10px] h-3" viewBox="0 0 10 12"><path d="M1 4h6v6H1z" fill="none" stroke="#eee" stroke-width="2"/><path d="M3 1.500h6.500V9" fill="none" stroke="#eee"/></svg></button>
      <button aria-label="Close drawing"><svg class="block w-[10px] h-3" viewBox="0 0 10 12"><path d="M1 2l8 8M9 2l-8 8" stroke="#eee" stroke-width="2.400"/></svg></button>
    </div>

    <!-- view cube -->
    <svg class="absolute right-1 top-[31px] w-[156px] h-[150px]" viewBox="0 0 156 150">
      <circle cx="78" cy="75" r="54" fill="none" stroke="#444a51" stroke-width="13"/>
      <path d="M52 49h52v52H52z" fill="#b2b3b5"/><path d="M62 59h32v32H62z" fill="#a1a8ad"/>
      <g font-family="Liberation Sans, sans-serif" font-weight="bold" font-size="21" fill="#b5b6b7" text-anchor="middle">
        <text x="78" y="26">N</text><text x="78" y="139">S</text><text x="22" y="82">W</text><text x="134" y="82">E</text>
        <text x="78" y="79" font-size="12" fill="#4c535b">TOP</text>
      </g>
    </svg>
    <button class="absolute right-[58px] top-[193px] flex items-center justify-between w-12 h-[18px] px-1 rounded bg-[#9396a4] border border-[#7c7f8c] text-[11px] leading-4 text-[#555a68] font-['Liberation_Sans']">WCS
      <svg class="w-2 h-[5px]" viewBox="0 0 8 5"><path d="M0.500 0.500h7L4 4.500z" fill="#a9acb8" stroke="#c0c2cc" stroke-width="0.800"/></svg>
    </button>

    <!-- navigation bar -->
    <div class="absolute right-[3px] top-[236px] w-8 h-[212px] rounded bg-[#5c6168] border border-[#6d7278]">
      <svg class="w-full h-full" viewBox="0 0 32 212" fill="none" stroke="#3f454d" stroke-width="1.300">
        <circle cx="26" cy="5" r="3.500"/><path d="M24 3l4 4M28 3l-4 4"/>
        <path d="M16 19h11v11a11 11 0 1 1-11-11z"/><circle cx="16" cy="30" r="6"/><path d="M12 34l-4 4M20 34l4 4"/>
        <path d="M14 49h5l-2.500 3z" fill="#3f454d"/>
        <path d="M3 56h26" stroke="#6a6f76"/>
        <path d="M10 83L4 73c0-2 3-2 6 2L8 65c0-2 2-2 3 0l1 6V62c0-2 3-2 3 0v9l2-8c1-2 3-1 3 0l-1 9 3-6c2-1 3 0 2 2l-3 9-3 6z"/>
        <path d="M5 90l15 15M19 90L5 104M5 94v-4h4M15 90h4v4M5 100v4h4"/><circle cx="20" cy="104" r="5"/><path d="M24 108l4 4" stroke-width="3"/>
        <path d="M14 119h5l-2.500 3z" fill="#3f454d"/>
        <path d="M14 148v-16h-3l5-6 5 6h-3v16z"/><path d="M12 142c-12-2-11-7 2-7M18 135c12 0 12 7-3 7"/><path d="M7 142l5-3v6z" fill="#3f454d"/>
        <path d="M14 157h5l-2.500 3z" fill="#3f454d"/>
        <path d="M3 164h26" stroke="#6a6f76"/>
        <path d="M4.500 169.500h6v6h-6zM12.500 169.500h6v6h-6zM20.500 169.500h6v6h-6zM4.500 178.500h16v13h-16z"/><path d="M9 181l7 4-7 4z" fill="#3f454d"/>
        <circle cx="26" cy="206" r="3.500"/><path d="M24 206h4"/>
      </svg>
    </div>

    <!-- ucs icon -->
    <svg class="absolute left-[13px] bottom-[15px] w-[76px] h-[73px]" viewBox="0 0 76 73" fill="none" stroke="#eee" stroke-width="1.200">
      <path d="M5.500 18v50H56M1.500 63.500h9v9h-9z"/><path d="M7 1l6.500 6.500L20 1M13.500 7v7M60 54l13 13M73 54L60 67"/>
    </svg>

    <!-- command line -->
    <div class="absolute left-[20%] bottom-0 flex w-3/5 h-[34px] rounded-t-sm overflow-hidden border border-[#5f6264]/60">
      <div class="flex items-center w-[67px] shrink-0 bg-gradient-to-b from-[#6a6c6e] to-[#3c3d3e] pl-1">
        <svg class="w-[6px] h-[22px]" viewBox="0 0 6 22"><path d="M1 0v22M5 0v22" stroke="#a5a5a5" stroke-width="2" stroke-dasharray="2 2"/></svg>
        <button aria-label="Close command line" class="ml-2"><svg class="block w-3 h-3" viewBox="0 0 12 12"><path d="M1 1l10 10M11 1L1 11" stroke="#d4d4d4" stroke-width="2.200"/></svg></button>
        <button aria-label="Customize command line" class="ml-[13px]"><svg class="block w-5 h-5" viewBox="0 0 20 20"><path d="M6 1c5-1 7 3 5 6l8 9-3 3-8-9C4 12 0 9 2 5l4 3 2-2z" fill="#c3c8d2"/></svg></button>
      </div>
      <div class="flex-1 flex items-center bg-[#dcdcdc]/85 pl-[6px]">
        <svg class="w-5 h-[18px]" viewBox="0 0 20 18"><rect x="0.500" y="0.500" width="19" height="17" rx="2" fill="#9ba7b4" stroke="#8592a0"/><path d="M4 5l4 4-4 4M10 13h5" fill="none" stroke="#4b5866" stroke-width="1.500"/></svg>
        <svg class="w-2 h-[5px] ml-[3px]" viewBox="0 0 8 5"><path d="M0 0h8L4 5z" fill="#666"/></svg>
        <input type="text" aria-label="Command" placeholder="Type a command" class="flex-1 ml-[9px] text-lg italic text-black placeholder:text-[#7a7b7c] font-['DejaVu_Sans_Mono']" />
        <svg class="w-2 h-[5px] mr-[7px]" viewBox="0 0 8 5"><path d="M0 5h8L4 0z" fill="#222"/></svg>
      </div>
    </div>
  </div>

  <!-- LAYOUT TABS -->
  <footer class="flex justify-between h-[59px] shrink-0 border-t border-[#5a5a5a] bg-[#383838]">
    <div class="flex items-start pl-2 leading-5">
      <button class="relative w-[82px] h-[22px] font-bold text-white">
        <svg class="absolute left-0 top-0 w-[82px] h-[23px]" viewBox="0 0 82 23"><path d="M0 0C10 0 8 22 16 22H68C76 22 74 0 82 0z" fill="url(#sheetOn)"/></svg>
        <span class="relative">Model</span>
      </button>
      <button class="relative w-[78px] h-[22px] text-[#bcbcbc]">
        <svg class="absolute left-0 top-0 w-[78px] h-[23px]" viewBox="0 0 78 23"><path d="M0 0C6 4 4 22 11 22H66C75 22 74 4 78 0z" fill="url(#sheetOff)"/></svg>
        <span class="relative">Layout1</span>
      </button>
      <button class="relative w-[88px] h-[22px] pr-1 text-[#bcbcbc]">
        <svg class="absolute left-0 top-0 w-[92px] h-[23px]" viewBox="0 0 92 23"><path d="M0 0C6 4 4 22 11 22H72C82 22 80 0 92 0z" fill="url(#sheetOff)"/></svg>
        <span class="relative">Layout2</span>
      </button>
      <button aria-label="New layout" class="mt-px">
        <svg class="block w-[30px] h-5" viewBox="0 0 30 20"><path d="M1 19.500Q3 1 14 0.500H29Q29 18 18 19.500z" fill="#484848" stroke="#5e5e5e"/><path d="M16 5v10M11 10h10" stroke="#c8c8c8" stroke-width="2.500"/></svg>
      </button>
    </div>

    <!-- status bar -->
    <div class="self-end flex gap-px h-[33px] mb-px text-white">
      <button class="w-[62px] border border-[#888] bg-[#505050] text-[15px]">MODEL</button>
      <div class="flex items-center w-[81px] border border-[#888] bg-[#505050]">
        <button aria-label="Grid" class="w-[30px] flex justify-center"><svg class="w-5 h-5" viewBox="0 0 20 20"><path d="M1 3.500h18M1 8h18M1 12.500h18M1 17h18" stroke="#2070d0"/><path d="M3.500 1v18M8 1v18M12.500 1v18M17 1v18" stroke="#2f98ff" stroke-width="2"/></svg></button>
        <button aria-label="Snap" class="w-[30px] flex justify-center"><svg class="w-5 h-5" viewBox="0 0 20 20"><path d="M1 2h18M1 6h18M1 10h18M1 14h18M1 18h18" stroke="#2c84f4" stroke-width="2" stroke-dasharray="2 1"/></svg></button>
        <svg class="w-[10px] h-[6px] ml-1"><use href="#arrowBig"/></svg>
      </div>
      <div class="flex items-center w-[211px] border border-[#888] bg-[#505050]">
        <button aria-label="Ortho" class="w-[30px] flex justify-center"><svg class="w-5 h-5" viewBox="0 0 20 20"><path d="M3 2v15h16M3 11h5v6" fill="none" stroke="#b0b0b0" stroke-width="1.500"/></svg></button>
        <button aria-label="Polar" class="w-[30px] flex justify-center"><svg class="w-5 h-5" viewBox="0 0 20 20"><circle cx="9" cy="10" r="8" fill="none" stroke="#b0b0b0" stroke-width="1.500"/><path d="M9 10h11M9 10l6-6M14 6v7" fill="none" stroke="#b0b0b0" stroke-width="1.500"/></svg></button>
        <svg class="w-[10px] h-[6px] ml-1"><use href="#arrowBig"/></svg>
        <button aria-label="Isometric" class="w-[30px] flex justify-center ml-[6px]"><svg class="w-6 h-6" viewBox="0 0 24 24"><path d="M12 0v24M2 2l20 20" stroke="#a8a8a8" stroke-width="1.500"/></svg></button>
        <svg class="w-[10px] h-[6px] ml-1"><use href="#arrowBig"/></svg>
        <span class="w-px h-full bg-[#888] ml-1"></span>
        <button aria-label="Object snap tracking" class="w-[30px] flex justify-center"><svg class="w-5 h-5" viewBox="0 0 20 20"><path d="M17 2L2 18h18" fill="none" stroke="#2288f5" stroke-width="1.500"/><circle cx="9" cy="10" r="2.200" fill="#2fa0ff"/></svg></button>
        <button aria-label="Object snap" class="w-[30px] flex justify-center"><svg class="w-5 h-5" viewBox="0 0 20 20"><path d="M3 3h15v15H3z" fill="none" stroke="#2288f5" stroke-width="1.500"/><path d="M0.500 0.500h6v6h-6z" fill="#10d020" stroke="#063"/></svg></button>
        <svg class="w-[10px] h-[6px] ml-1"><use href="#arrowBig"/></svg>
      </div>
      <div class="flex items-center w-[132px] border border-[#888] bg-[#505050]">
        <button aria-label="Annotation visibility" class="w-[30px] flex justify-center"><svg class="w-5 h-5" viewBox="0 0 20 20"><path d="M10 0l3 10 7 9-10-4-10 4 7-9z" fill="#2a8ff8"/><circle cx="15" cy="5" r="3.500" fill="#505050" stroke="#2a8ff8" stroke-width="1.500"/></svg></button>
        <button aria-label="Auto scale" class="w-[30px] flex justify-center"><svg class="w-5 h-5" viewBox="0 0 20 20"><path d="M10 0l3 10 7 9-10-4-10 4 7-9z" fill="#c4c4c4"/><path d="M17 0l-4 6h4l-3 5" fill="none" stroke="#c4c4c4" stroke-width="2"/></svg></button>
        <button aria-label="Annotation scale" class="w-[30px] flex justify-center"><svg class="w-5 h-5" viewBox="0 0 20 20"><path d="M10 0l3 10 7 9-10-4-10 4 7-9z" fill="#c4c4c4"/></svg></button>
        <button class="flex items-center gap-[3px] ml-[5px]">1:1<svg class="w-[10px] h-[6px]"><use href="#arrowBig"/></svg></button>
      </div>
      <div class="flex items-center w-[51px] border border-[#888] bg-[#505050]">
        <button aria-label="Workspace switching" class="w-[30px] flex justify-center"><svg class="w-4 h-4" viewBox="0 0 20 20"><path d="M10 1v18M1 10h18M3.600 3.600l12.800 12.800M16.400 3.600L3.600 16.400" stroke="#c8c8c8" stroke-width="4"/><circle cx="10" cy="10" r="5.500" fill="none" stroke="#c8c8c8" stroke-width="4"/><circle cx="10" cy="10" r="3" fill="#505050"/></svg></button>
        <svg class="w-[10px] h-[6px] ml-1"><use href="#arrowBig"/></svg>
      </div>
      <button aria-label="Annotation monitor" class="flex items-center justify-center w-[31px] border border-[#888] bg-[#505050]"><svg class="w-5 h-5" viewBox="0 0 20 20"><path d="M10 1v18M1 10h18" stroke="#ccc" stroke-width="2"/></svg></button>
      <button aria-label="Isolate objects" class="flex items-center justify-center w-8 border border-[#888] bg-[#505050]"><svg class="w-5 h-5" viewBox="0 0 20 20" fill="none" stroke="#c8c8c8" stroke-width="1.500"><path d="M1 1h8v8H1zM9 12l4 6H5z"/><circle cx="15" cy="9" r="4"/></svg></button>
      <button aria-label="Hardware acceleration" class="flex items-center justify-center w-[33px] border border-[#888] bg-[#505050]"><svg class="w-[22px] h-[22px]" viewBox="0 0 22 22"><circle cx="11" cy="11" r="10" fill="#0c56a0" stroke="#1b86ee" stroke-width="1.500"/><path d="M10 15l6-5" stroke="#3fa5ff" stroke-width="1.800"/></svg></button>
      <span class="w-[6px] border border-[#888] bg-[#505050]"></span>
      <div class="flex items-center w-[61px] border border-[#888] bg-[#505050]">
        <button aria-label="Clean screen" class="w-[30px] flex justify-center"><svg class="w-5 h-[15px]" viewBox="0 0 20 15"><path d="M1 1h18v13H1z" fill="none" stroke="#ccc" stroke-width="1.500"/><path d="M3.500 11.500V7l4.500 4.500zM16.500 3.500V8L12 3.500z" fill="#ddd"/><path d="M5 10l3-3M15 5l-3 3" stroke="#ddd" stroke-width="1.500"/></svg></button>
        <button aria-label="Customization" class="w-[29px] flex justify-center"><svg class="w-5 h-4" viewBox="0 0 20 16"><path d="M0 1h20v2H0zM0 7h20v2H0zM0 13h20v2H0z" fill="#ccc"/></svg></button>
      </div>
    </div>
  </footer>

  <script>
    // grid spacing: five minor lines per major one
    const major = 113.3;
    const originX = 98.3;
    const originY = 107.3;

    function drawGrid() {
      const view = document.getElementById('viewport');
      const w = view.clientWidth;
      const h = view.clientHeight;
      let minorLines = '';
      let majorLines = '';

      for (let i = -5; originX + i * major / 5 < w; i++) {
        const x = Math.floor(originX + i * major / 5) + 0.5;
        const line = `<path d="M${x} 0V${h}"/>`;
        if (i % 5 === 0) majorLines += line; else minorLines += line;
      }
      for (let i = -5; originY + i * major / 5 < h; i++) {
        const y = Math.floor(originY + i * major / 5) + 0.5;
        const line = `<path d="M0 ${y}H${w}"/>`;
        if (i % 5 === 0) majorLines += line; else minorLines += line;
      }

      document.getElementById('minorGrid').innerHTML = minorLines;
      document.getElementById('majorGrid').innerHTML = majorLines;
    }

    window.addEventListener('resize', drawGrid);
    drawGrid();
  </script>
</body>
</html>
